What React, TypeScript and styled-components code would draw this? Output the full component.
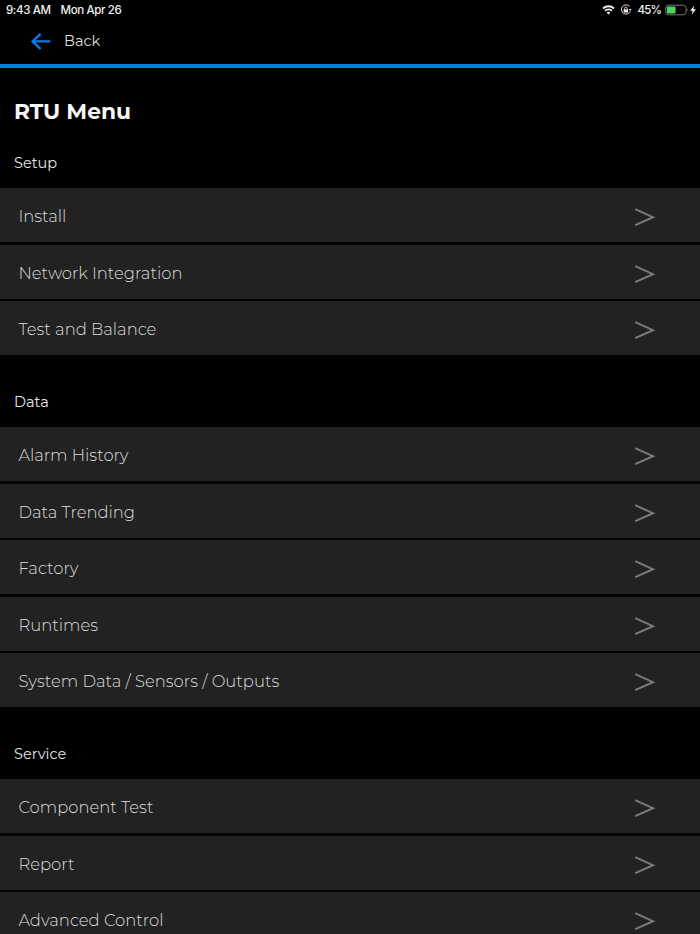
import React from "react";
import styled, { createGlobalStyle } from "styled-components";

const GlobalStyle = createGlobalStyle`
  * { box-sizing: border-box; }
  body {
    margin: 0;
    background: #000;
    overflow: hidden;
    font-family: Montserrat, Inter, "Open Sans", sans-serif;
  }
`;

const Screen = styled.div`
  display: flex;
  flex-direction: column;
  width: 700px;
  height: 934px;
  overflow: hidden;
  background: #000;
  color: #e6e6e6;
`;

const StatusBar = styled.header`
  display: flex;
  flex: none;
  align-items: center;
  height: 20px;
  padding: 0 3px 0 6px;
  font: 500 11.5px/20px Inter, sans-serif;
  color: #f0f0f0;
`;

const StatusText = styled.span<{ $tracking: number; $gap?: number }>`
  white-space: nowrap;
  letter-spacing: ${(p) => p.$tracking}px;
  margin-right: ${(p) => p.$gap ?? 0}px;
`;

const StatusIcons = styled.div`
  display: flex;
  align-items: center;
  height: 20px;
  margin-left: auto;

  svg { display: block; flex: none; }
`;

const Glyphs = styled.div`
  display: flex;
  align-items: center;
  gap: 5px;
  margin-right: 5px;
`;

const NavBar = styled.nav`
  display: flex;
  flex: none;
  align-items: center;
  height: 48px;
  padding: 0 0 2px 30px;
  border-bottom: 4px solid #0a78dc;
`;

const BackButton = styled.button`
  display: flex;
  align-items: center;
  gap: 12px;
  padding: 0;
  border: 0;
  background: none;
  color: #dedede;
  font: 400 14.5px/20px Montserrat, Inter, sans-serif;
`;

const Title = styled.h1`
  flex: none;
  margin: 0;
  height: 69px;
  padding: 29px 0 0 14px;
  font-size: 21.8px;
  line-height: 28px;
  font-weight: 700;
  color: #f7f7f7;
`;

const Section = styled.section`
  flex: none;
`;

const SectionTitle = styled.h2<{ $first?: boolean }>`
  display: flex;
  align-items: flex-end;
  height: ${(p) => (p.$first ? 51 : 72)}px;
  margin: 0;
  padding: 0 0 15.2px 14px;
  font-size: 14.5px;
  line-height: 20px;
  font-weight: 400;
`;

const MenuList = styled.ul`
  display: flex;
  flex-direction: column;
  gap: 2.5px;
  margin: 0;
  padding: 0;
  list-style: none;
`;

const MenuRow = styled.li`
  display: flex;
  align-items: center;
  justify-content: space-between;
  height: 54px;
  padding: 4px 44px 0 18.4px;
  background: #222;
`;

const MenuLabel = styled.span`
  padding-bottom: 1.8px;
  font-size: 16.4px;
  line-height: 24px;
  font-weight: 300;
  color: #dcdcdc;
  white-space: nowrap;
`;

const ChevronIcon = styled.svg`
  display: block;
  flex: none;
  width: 22px;
  height: 20px;
`;

type Group = { title: string; items: string[] };

const groups: Group[] = [
  { title: "Setup", items: ["Install", "Network Integration", "Test and Balance"] },
  {
    title: "Data",
    items: [
      "Alarm History",
      "Data Trending",
      "Factory",
      "Runtimes",
      "System Data / Sensors / Outputs",
    ],
  },
  { title: "Service", items: ["Component Test", "Report", "Advanced Control"] },
];

const Chevron = () => (
  <ChevronIcon viewBox="0 0 22 20" fill="none" stroke="#7c7c7c" strokeWidth="2">
    <path d="M1.2 2.2 L19 10.2 L1.2 18.2" />
  </ChevronIcon>
);

const BackArrow = () => (
  <svg width="22" height="20" viewBox="0 0 22 20" fill="none" stroke="#0a7be6" strokeWidth="2.4">
    <path d="M10.6 2.8 L2.6 10.4 L10.6 18 M2.6 10.4 H20.4" />
  </svg>
);

const Wifi = () => (
  <svg width="13" height="12" viewBox="0 0 14 12" fill="none" stroke="#f0f0f0" strokeWidth="2.1">
    <path d="M1.1 4.3 C4.4 1.3 9.6 1.3 12.9 4.3" />
    <path d="M3.3 6.9 C5.4 5 8.6 5 10.7 6.9" />
    <path d="M7 10.9 L4.9 8.7 C6.1 7.7 7.9 7.7 9.1 8.7 Z" fill="#f0f0f0" stroke="none" />
  </svg>
);

const RotationLock = () => (
  <svg width="12" height="12" viewBox="0 0 12 12" fill="none" stroke="#dcdcdc" strokeWidth="1">
    <path d="M9.5 2.5 A4.6 4.6 0 1 0 10.2 7.4" />
    <path d="M8.6 4.9 H11.7 L10.2 7 Z" fill="#dcdcdc" stroke="none" />
    <rect x="3.6" y="5.3" width="4.4" height="3.2" fill="#f0f0f0" stroke="none" />
    <path d="M4.5 5.5 V4.5 A1.3 1.3 0 0 1 7.1 4.5 V5.5" />
  </svg>
);

const Battery = () => (
  <svg width="24" height="12" viewBox="0 0 24 12">
    <rect x="0.7" y="1.2" width="20.4" height="9.6" rx="2.6" fill="none" stroke="#747474" />
    <rect x="1.9" y="2.4" width="8.6" height="7.2" rx="1.1" fill="#4cd75f" />
    <path d="M22.1 4.3 Q23.5 6 22.1 7.7 Z" fill="#747474" />
  </svg>
);

const Bolt = () => (
  <svg width="8" height="12" viewBox="0 0 8 12">
    <path d="M5.2 1.4 L1.1 6.7 H3.6 L2.6 10.7 L7 5.3 H4.4 Z" fill="#f0f0f0" />
  </svg>
);

export default function App() {
  return (
    <Screen>
      <GlobalStyle />
      <StatusBar>
        <StatusText $tracking={-0.38} $gap={10}>9:43 AM</StatusText>
        <StatusText $tracking={-0.38}>Mon Apr 26</StatusText>
        <StatusIcons>
          <Glyphs>
            <Wifi />
            <RotationLock />
          </Glyphs>
          <StatusText $tracking={-0.85} $gap={4}>45%</StatusText>
          <Battery />
          <Bolt />
        </StatusIcons>
      </StatusBar>
      <NavBar>
        <BackButton>
          <BackArrow />
          Back
        </BackButton>
      </NavBar>
      <Title>RTU Menu</Title>
      {groups.map((group, i) => (
        <Section key={group.title}>
          <SectionTitle $first={i === 0}>{group.title}</SectionTitle>
          <MenuList>
            {group.items.map((label) => (
              <MenuRow key={label}>
                <MenuLabel>{label}</MenuLabel>
                <Chevron />
              </MenuRow>
            ))}
          </MenuList>
        </Section>
      ))}
    </Screen>
  );
}
